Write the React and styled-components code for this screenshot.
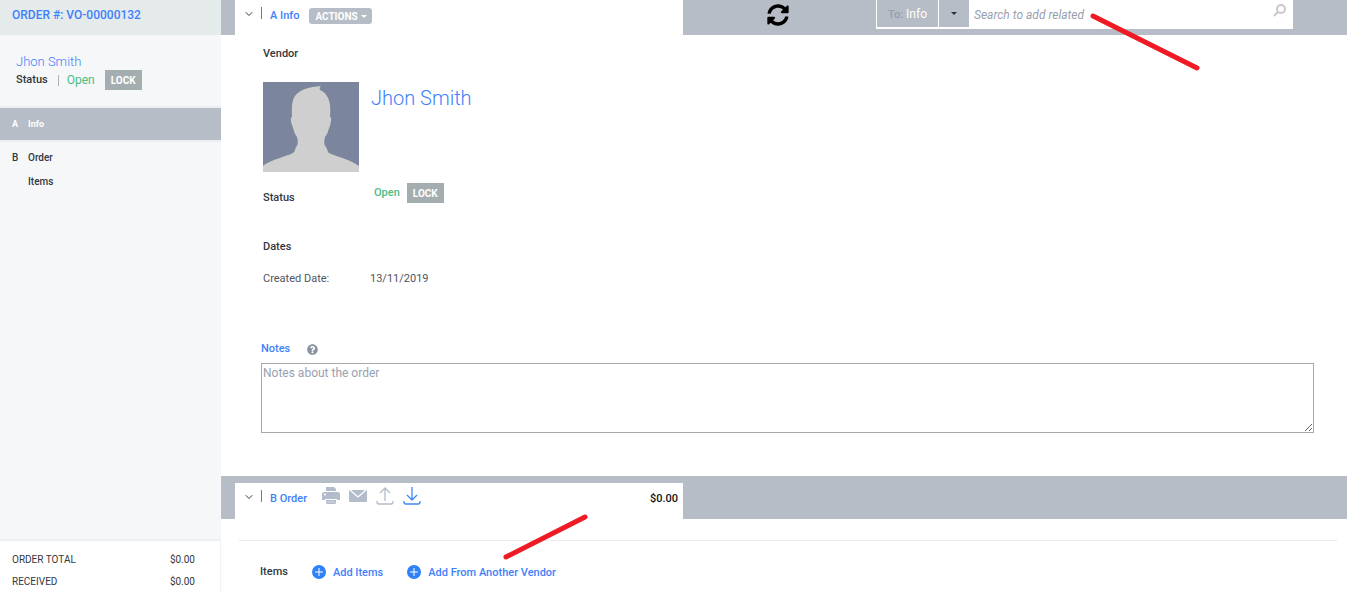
import { FaQuestionCircle, FaSyncAlt } from "react-icons/fa";
import { FiChevronDown } from "react-icons/fi";
import styled, { createGlobalStyle } from "styled-components";

const navItems = [
  { letter: "A", label: "Info", active: true },
  { letter: "B", label: "Order" },
  { letter: "", label: "Items" },
];

const totals = [
  { label: "ORDER TOTAL", value: "$0.00" },
  { label: "RECEIVED", value: "$0.00" },
];

const Avatar = () => (
  <AvatarSvg viewBox="0 0 96 90" role="img" aria-label="Jhon Smith">
    <rect width="96" height="90" fill="#7c859e" />
    <path
      fill="#cfcfcf"
      d="M0 90V84C8 77 27 74 31 70C33 67 32 65 34 64C35 61 35 58 34 55C31 51 30 45 29 43C28 40 27 35 29 35C29 28 28 20 32 14C37 7 47 5 58 4C56 6 56 8 59 9C67 14 68 24 67 35C69 35 68 40 67 44C65 48 65 52 62 55C61 59 61 62 62 64C64 65 64 69 66 71C75 75 88 78 96 84V90Z"
    />
  </AvatarSvg>
);

const PrintIcon = () => (
  <ToolSvg viewBox="0 0 18 18">
    <path
      fill="currentColor"
      d="M4 0h8l2 2v2H4zM2 5h14a2 2 0 0 1 2 2v6h-3v-1H3v1H0V7a2 2 0 0 1 2-2zM4 13h10v3l-1 1H5l-1-1z"
    />
    <circle cx="3" cy="7.500" r="1" fill="#fff" />
    <path d="M3 12.500h12M5 15h8" stroke="#fff" strokeWidth="0.500" />
  </ToolSvg>
);

const MailIcon = () => (
  <ToolSvg viewBox="0 0 18 18">
    <rect y="3" width="18" height="12" rx="1" fill="currentColor" />
    <path d="M1 3l8 7 8-7" fill="none" stroke="#fff" strokeWidth="1.200" />
  </ToolSvg>
);

const TransferIcon = ({ arrow }) => (
  <ToolSvg
    viewBox="0 0 18 18"
    fill="none"
    stroke="currentColor"
    strokeWidth="1.300"
  >
    <path d="M1 14v1a2 2 0 0 0 2 2h12a2 2 0 0 0 2-2v-1" />
    <path d={arrow} />
  </ToolSvg>
);

const SearchIcon = () => (
  <svg width="14" height="14" viewBox="0 0 14 14" fill="none" stroke="#c9c9c9">
    <circle cx="8" cy="5" r="4" strokeWidth="2" />
    <path d="M5 8l-4 4" strokeWidth="2" />
  </svg>
);

const PlusIcon = () => (
  <svg width="14" height="14" viewBox="0 0 14 14">
    <circle cx="7" cy="7" r="7" fill="#2f80f9" />
    <path d="M7 3v8M3 7h8" stroke="#fff" />
  </svg>
);

const App = () => {
  return (
    <Page>
      <GlobalStyle />

      <Sidebar>
        <OrderNumber>ORDER #: VO-00000132</OrderNumber>
        <Summary>
          <SummaryName href="#vendor">Jhon Smith</SummaryName>
          <SummaryStatus>
            <strong>Status</strong>
            <Separator />
            <SummaryOpen>Open</SummaryOpen>
            <LockButton type="button">LOCK</LockButton>
          </SummaryStatus>
        </Summary>
        <nav>
          {navItems.map(({ letter, label, active }) => (
            <NavItem key={label} href={`#${label}`} $active={active}>
              <span>{letter}</span>
              <span>{label}</span>
            </NavItem>
          ))}
        </nav>
        <Totals>
          {totals.map(({ label, value }) => (
            <TotalRow key={label}>
              <span>{label}</span>
              <span>{value}</span>
            </TotalRow>
          ))}
        </Totals>
      </Sidebar>

      <Main>
        <SectionBar>
          <SectionTab>
            <ToggleButton type="button" aria-label="Collapse info">
              <FiChevronDown size={12} />
            </ToggleButton>
            <TabMark />
            <TabTitle>A Info</TabTitle>
            <ActionsButton type="button">
              ACTIONS
              <Caret />
            </ActionsButton>
          </SectionTab>
          <BarTools>
            <RefreshButton type="button" aria-label="Refresh">
              <FaSyncAlt size={22} />
            </RefreshButton>
            <SearchGroup>
              <ScopeButton type="button">
                <ScopeLabel>To:</ScopeLabel> Info
              </ScopeButton>
              <ScopeToggle type="button" aria-label="Choose target">
                <Caret />
              </ScopeToggle>
              <SearchInput
                type="text"
                aria-label="Search to add related"
                placeholder="Search to add related"
              />
              <SearchButton type="button" aria-label="Search">
                <SearchIcon />
              </SearchButton>
            </SearchGroup>
          </BarTools>
        </SectionBar>

        <InfoBody>
          <Heading>Vendor</Heading>
          <VendorRow>
            <Avatar />
            <VendorName href="#vendor">Jhon Smith</VendorName>
          </VendorRow>
          <StatusRow>
            <Heading>Status</Heading>
            <StatusValue>
              <StatusOpen>Open</StatusOpen>
              <LockButton type="button">LOCK</LockButton>
            </StatusValue>
          </StatusRow>
          <DatesHeading>Dates</DatesHeading>
          <DateRow>
            <span>Created Date:</span>
            <span>13/11/2019</span>
          </DateRow>
        </InfoBody>

        <NotesBlock>
          <NotesHeader>
            <NotesLabel htmlFor="notes">Notes</NotesLabel>
            <FaQuestionCircle size={11} color="#8a92a0" />
          </NotesHeader>
          <NotesInput id="notes" placeholder="Notes about the order" />
        </NotesBlock>

        <SectionBar $offset>
          <SectionTab>
            <ToggleButton type="button" aria-label="Collapse order">
              <FiChevronDown size={12} />
            </ToggleButton>
            <TabMark />
            <TabTitle>B Order</TabTitle>
            <ToolGroup>
              <ToolButton type="button" aria-label="Print">
                <PrintIcon />
              </ToolButton>
              <ToolButton type="button" aria-label="Email">
                <MailIcon />
              </ToolButton>
              <ToolButton type="button" aria-label="Upload">
                <TransferIcon arrow="M9 14V1M4 6l5-5 5 5" />
              </ToolButton>
              <ToolButton type="button" aria-label="Download" $active>
                <TransferIcon arrow="M9 0v13M4 8l5 5 5-5" />
              </ToolButton>
            </ToolGroup>
            <TabAmount>$0.00</TabAmount>
          </SectionTab>
        </SectionBar>

        <Divider />
        <ItemsRow>
          <Heading>Items</Heading>
          <AddButton type="button">
            <PlusIcon />
            Add Items
          </AddButton>
          <AddButton type="button">
            <PlusIcon />
            Add From Another Vendor
          </AddButton>
        </ItemsRow>
      </Main>

      <Markup aria-hidden="true">
        <path d="M1093 16L1197 68M506 557L585 517" />
      </Markup>
    </Page>
  );
};

const GlobalStyle = createGlobalStyle`
  * {
    box-sizing: border-box;
  }

  body {
    margin: 0;
    overflow: hidden;
    background: #fff;
    color: #33383f;
    font-family: Roboto, "Liberation Sans", sans-serif;
    font-size: 11px;
    line-height: 16px;
  }

  button, input, textarea {
    font-family: inherit;
  }

  button {
    border: 0;
    padding: 0;
    background: none;
    cursor: pointer;
  }

  a {
    color: #3f80fb;
    text-decoration: none;
  }

  svg {
    display: block;
    flex: none;
  }
`;

const Page = styled.div`
  position: relative;
  display: flex;
  height: 100vh;
`;

const Sidebar = styled.aside`
  display: flex;
  flex-direction: column;
  flex: none;
  width: 221px;
  background: #f5f7f9;
`;

const OrderNumber = styled.div`
  height: 35px;
  padding: 7px 12px;
  background: #e5ebeb;
  color: #3f80fb;
  font-size: 12px;
  font-weight: 500;
`;

const Summary = styled.div`
  height: 73px;
  padding: 19px 16px 0;
  border-bottom: 2px solid #ebeff1;
`;

const SummaryName = styled.a`
  display: block;
  font-size: 13px;
  font-weight: 300;
`;

const SummaryStatus = styled.div`
  display: flex;
  align-items: center;
  height: 20px;

  strong {
    font-weight: 500;
  }
`;

const Separator = styled.span`
  width: 1px;
  height: 11px;
  margin: 0 8px 0 10px;
  background: #a9b0b8;
`;

const SummaryOpen = styled.span`
  margin-right: 10px;
  color: #4dbd85;
  font-size: 12px;
`;

const LockButton = styled.button`
  height: 20px;
  padding: 0 6px;
  background: #a4aeb0;
  color: #fff;
  font-size: 10px;
  font-weight: 700;
`;

const NavItem = styled.a`
  display: grid;
  grid-template-columns: 16px 1fr;
  align-items: center;
  height: ${({ $active }) => ($active ? 34 : 24)}px;
  margin-bottom: ${({ $active }) => ($active ? 4 : 0)}px;
  padding: 0 12px;
  border-bottom: ${({ $active }) => ($active ? "2px solid #ebeff1" : "0")};
  background: ${({ $active }) => ($active ? "#b6bdc6" : "transparent")};
  color: ${({ $active }) => ($active ? "#fff" : "#33383f")};
  font-size: ${({ $active }) => ($active ? 9 : 10)}px;
  font-weight: ${({ $active }) => ($active ? 700 : 500)};
`;

const Totals = styled.div`
  margin-top: auto;
  padding: 8px 25px 0 12px;
  border-top: 2px solid #ebeff1;
  border-right: 1px solid #f0f2f4;
  background: #fff;
`;

const TotalRow = styled.div`
  display: flex;
  align-items: center;
  justify-content: space-between;
  height: 22px;
  font-size: 10px;
`;

const Main = styled.main`
  flex: 1;
  min-width: 0;
`;

const SectionBar = styled.div`
  display: flex;
  height: ${({ $offset }) => ($offset ? 43 : 35)}px;
  padding: ${({ $offset }) => ($offset ? 7 : 0)}px 0 0 14px;
  background: #b6bdc6;
`;

const SectionTab = styled.div`
  display: flex;
  align-items: flex-start;
  flex: none;
  width: 448px;
  padding: 7px 5px 0 7px;
  background: #fff;
`;

const ToggleButton = styled.button`
  display: grid;
  place-items: center;
  width: 13px;
  height: 14px;
  color: #33383f;
`;

const TabMark = styled.span`
  width: 1px;
  height: 12px;
  margin: 0 8px 0 6px;
  background: #4f9a4a;
`;

const TabTitle = styled.span`
  padding-top: 1px;
  color: #3f80fb;
  font-weight: 500;
`;

const ActionsButton = styled.button`
  display: flex;
  align-items: center;
  gap: 3px;
  height: 16px;
  margin: 1px 0 0 10px;
  padding: 0 5px 0 6px;
  border-radius: 3px;
  background: #b6bdc6;
  color: #fff;
  font-size: 10px;
  font-weight: 700;
`;

const Caret = styled.span`
  border: 3px solid transparent;
  border-top-color: currentColor;
  border-bottom: 0;
`;

const BarTools = styled.div`
  display: flex;
  align-items: flex-start;
  flex: 1;
  padding-right: 54px;
`;

const RefreshButton = styled.button`
  margin: 4px auto 0 84px;
  color: #000;
`;

const SearchGroup = styled.div`
  display: flex;
  width: 417px;
  height: 29px;
  padding: 0 0 2px 1px;
  background: #fff;
`;

const ScopeButton = styled.button`
  width: 61px;
  margin-right: 1px;
  background: #b6bdc6;
  color: #fff;
  font-size: 12px;
`;

const ScopeLabel = styled.span`
  color: #959eae;
  font-size: 11px;
  font-weight: 500;
`;

const ScopeToggle = styled.button`
  display: grid;
  place-items: center;
  width: 30px;
  background: #b6bdc6;
  color: #25304a;
`;

const SearchInput = styled.input`
  flex: 1;
  min-width: 0;
  padding: 2px 5px 0;
  border: 0;
  background: none;
  font-size: 12px;
  font-style: italic;

  &::placeholder {
    color: #98a1b0;
  }
`;

const SearchButton = styled.button`
  display: flex;
  padding: 4px 6px 0 0;
`;

const InfoBody = styled.section`
  height: 306px;
  padding: 11px 42px 0;
`;

const Heading = styled.h2`
  margin: 0;
  font-size: 11px;
  font-weight: 500;
`;

const VendorRow = styled.div`
  display: flex;
  gap: 12px;
  margin-top: 20px;
`;

const AvatarSvg = styled.svg`
  width: 96px;
  height: 90px;
`;

const VendorName = styled.a`
  padding-top: 4px;
  font-size: 20px;
  font-weight: 300;
  line-height: 24px;
`;

const StatusRow = styled.div`
  display: grid;
  grid-template-columns: 111px 1fr;
  align-items: end;
  margin-top: 11px;
`;

const StatusValue = styled.div`
  display: flex;
  align-items: center;
  gap: 7px;
  margin-bottom: 3px;
`;

const StatusOpen = styled.span`
  color: #4dbd85;
  font-weight: 500;
`;

const DatesHeading = styled(Heading)`
  margin-top: 33px;
`;

const DateRow = styled.div`
  display: grid;
  grid-template-columns: 107px 1fr;
  margin-top: 16px;
  color: #50555c;
`;

const NotesBlock = styled.section`
  height: 135px;
  padding: 0 33px 0 40px;
`;

const NotesHeader = styled.div`
  display: flex;
  align-items: center;
  gap: 17px;
  height: 16px;
  margin-bottom: 6px;
`;

const NotesLabel = styled.label`
  color: #3f80fb;
  font-weight: 500;
`;

const NotesInput = styled.textarea`
  display: block;
  width: 100%;
  height: 70px;
  padding: 1px;
  border: 1px solid #a9a9a9;
  font-size: 12px;
  line-height: 16px;

  &::placeholder {
    color: #98a1b0;
  }
`;

const ToolGroup = styled.div`
  display: flex;
  gap: 9px;
  margin: -3px 0 0 15px;
`;

const ToolButton = styled.button`
  color: ${({ $active }) => ($active ? "#3f88f5" : "#b3bccb")};
`;

const ToolSvg = styled.svg`
  width: 18px;
  height: 18px;
`;

const TabAmount = styled.span`
  margin-left: auto;
  padding-top: 1px;
  color: #111;
  font-weight: 500;
`;

const Divider = styled.hr`
  margin: 21px 10px 0 18px;
  border: 0;
  border-top: 1px solid #ebebeb;
`;

const ItemsRow = styled.div`
  display: flex;
  align-items: center;
  gap: 24px;
  margin-top: 23px;
  padding-left: 39px;
`;

const AddButton = styled.button`
  display: flex;
  align-items: center;
  gap: 7px;
  color: #3f80fb;
  font-size: 11px;
  font-weight: 500;
`;

const Markup = styled.svg`
  position: absolute;
  top: 0;
  left: 0;
  width: 100%;
  height: 100%;
  fill: none;
  stroke: #ed1c24;
  stroke-width: 5px;
  stroke-linecap: round;
  pointer-events: none;
`;

export default App;
